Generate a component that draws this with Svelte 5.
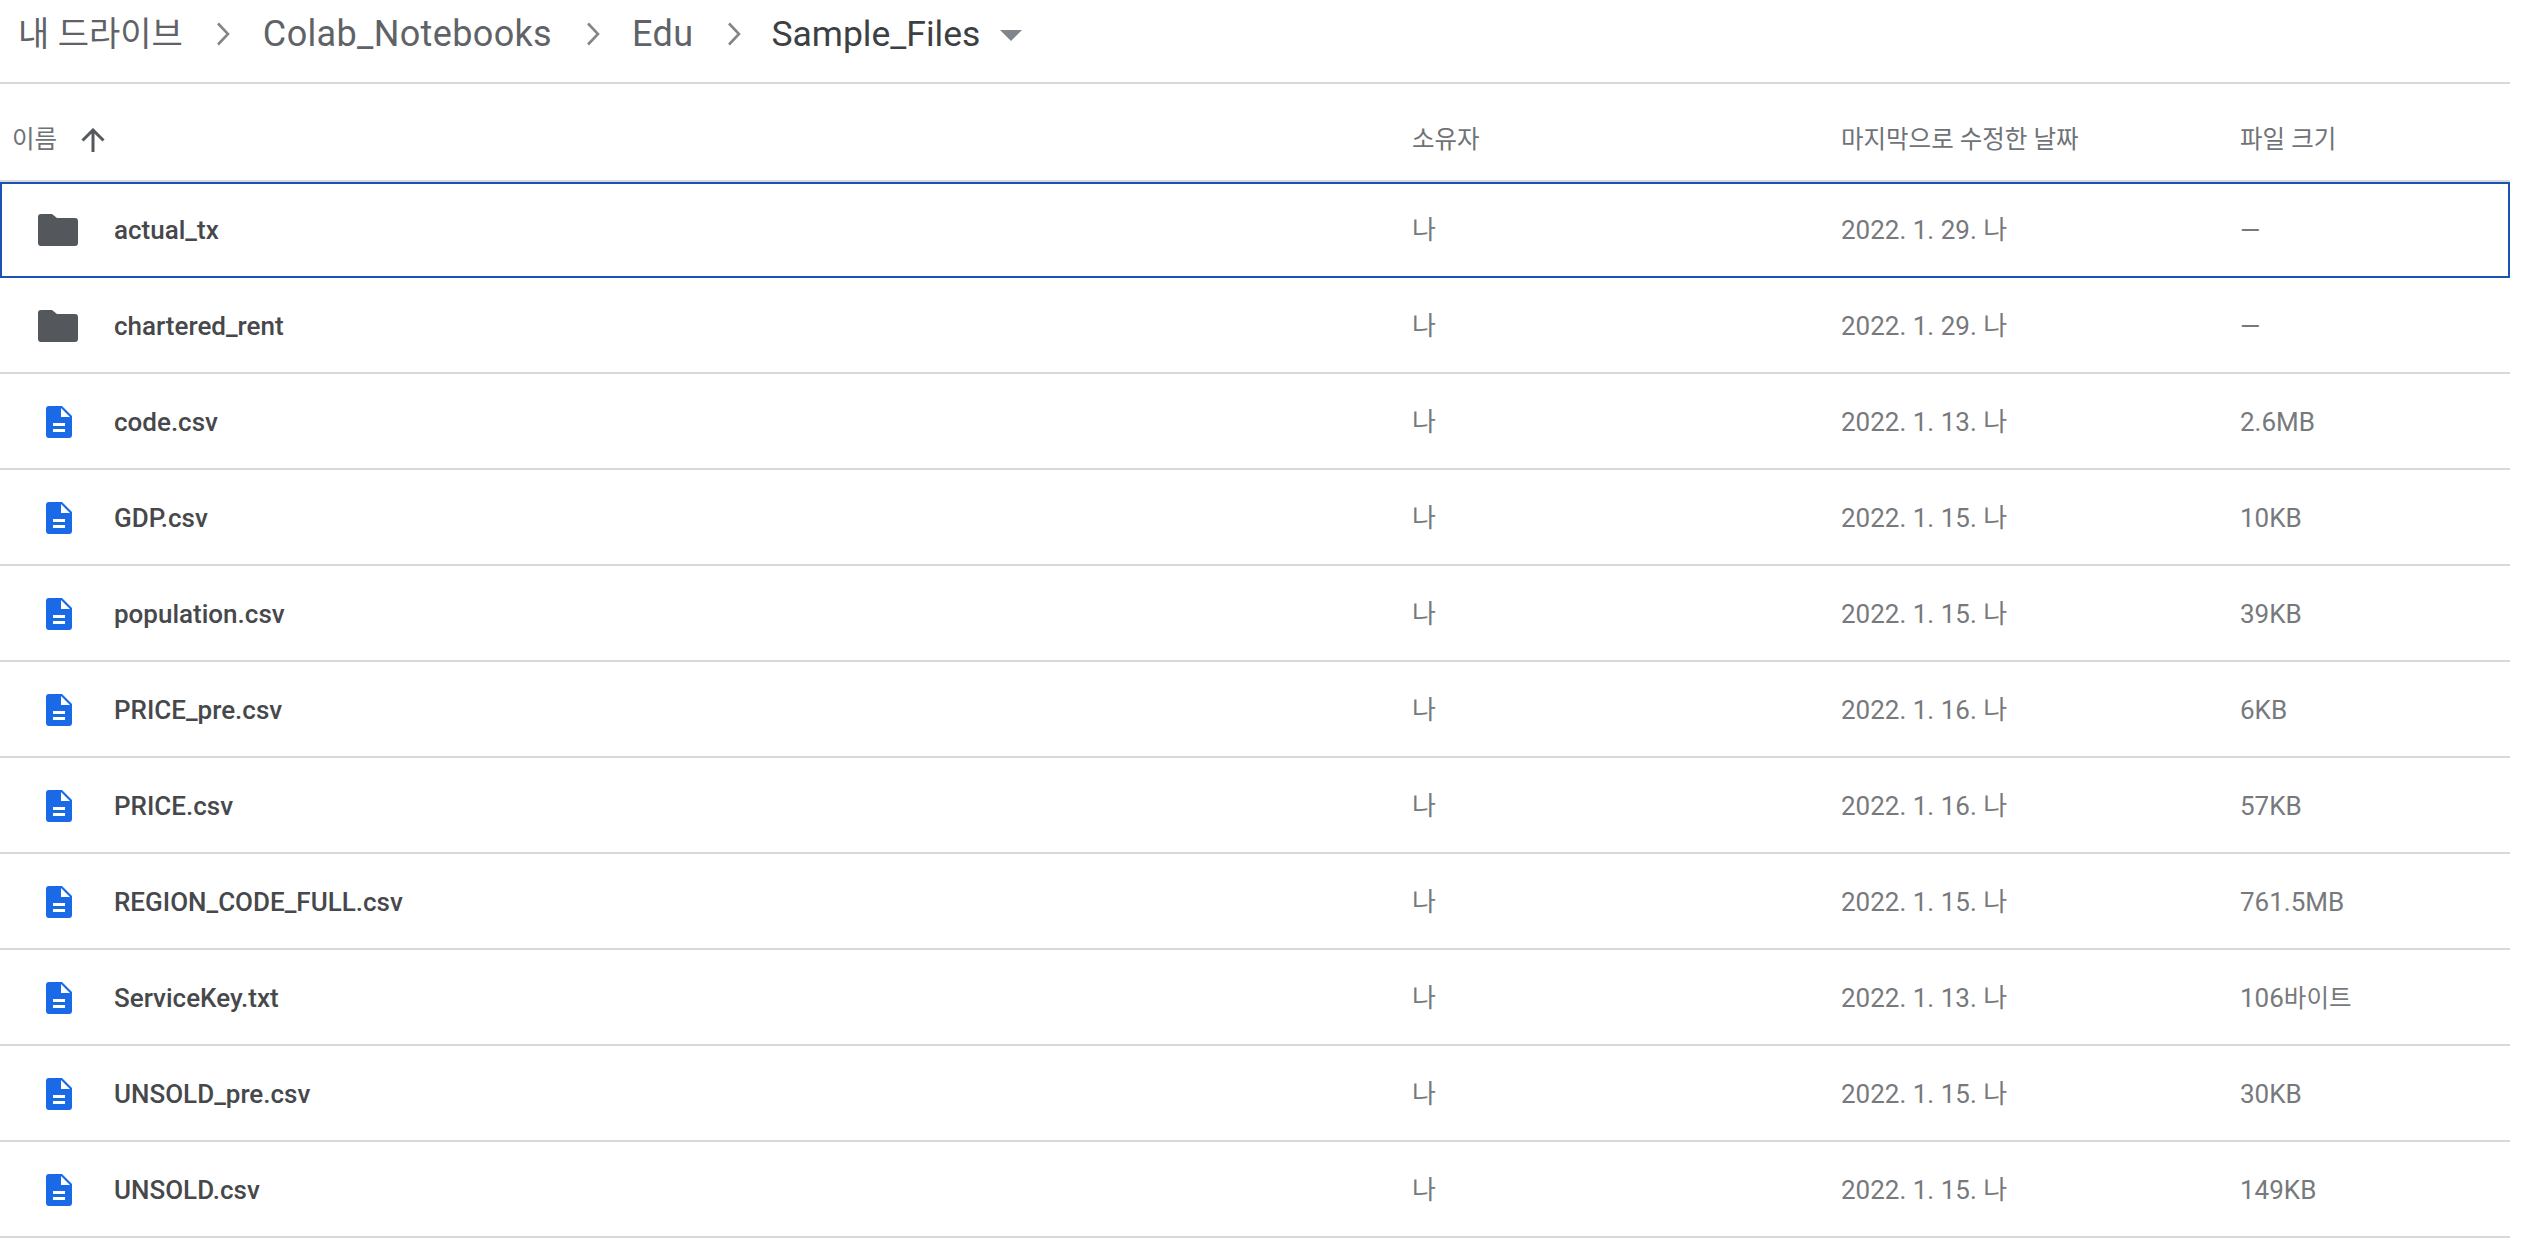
<script>
  const rows = [
    ['folder','actual_tx','2022. 1. 29. 나','—'],
    ['folder','chartered_rent','2022. 1. 29. 나','—'],
    ['file','code.csv','2022. 1. 13. 나','2.6MB'],
    ['file','GDP.csv','2022. 1. 15. 나','10KB'],
    ['file','population.csv','2022. 1. 15. 나','39KB'],
    ['file','PRICE_pre.csv','2022. 1. 16. 나','6KB'],
    ['file','PRICE.csv','2022. 1. 16. 나','57KB'],
    ['file','REGION_CODE_FULL.csv','2022. 1. 15. 나','761.5MB'],
    ['file','ServiceKey.txt','2022. 1. 13. 나','106바이트'],
    ['file','UNSOLD_pre.csv','2022. 1. 15. 나','30KB'],
    ['file','UNSOLD.csv','2022. 1. 15. 나','149KB'],
  ];
</script>

<div class="page">
  <nav class="crumbs">
    <span class="crumb first">내 드라이브</span>
    <svg class="sep" viewBox="0 0 14 24"><path d="M2 1.5 12 12 2 22.5" /></svg>
    <span class="crumb wide">Colab_Notebooks</span>
    <svg class="sep" viewBox="0 0 14 24"><path d="M2 1.5 12 12 2 22.5" /></svg>
    <span class="crumb wide edu">Edu</span>
    <svg class="sep" viewBox="0 0 14 24"><path d="M2 1.5 12 12 2 22.5" /></svg>
    <span class="crumb current">Sample_Files</span>
    <span class="caret"></span>
  </nav>

  <div class="grid head">
    <div class="hname">이름
      <svg class="arrow" viewBox="0 0 24 24"><path d="M12 24V2M1.5 12.5 12 2l10.5 10.5" /></svg>
    </div>
    <div>소유자</div>
    <div>마지막으로 수정한 날짜</div>
    <div>파일 크기</div>
  </div>

  {#each rows as r, i}
    <div class="grid row" class:focus={i === 0}>
      <div class="name">
        <span class="ico" class:file={r[0] === 'file'}>
          {#if r[0] === 'folder'}
            <svg width="40" height="32" viewBox="0 0 40 32"><path fill="#54575c" d="M3 0h11l5 4h18a3 3 0 0 1 3 3v22a3 3 0 0 1-3 3H3a3 3 0 0 1-3-3V3a3 3 0 0 1 3-3z"/></svg>
          {:else}
            <svg width="26" height="32" viewBox="0 0 26 32"><path fill="#1a6ae8" d="M3 0h13l10 10v19a3 3 0 0 1-3 3H3a3 3 0 0 1-3-3V3a3 3 0 0 1 3-3z"/><path fill="#fff" d="M15 2v9h9zM7 17h12v3H7zM7 23h12v3H7z"/></svg>
          {/if}
        </span>
        <span>{r[1]}</span>
      </div>
      <div class="sub">나</div>
      <div class="sub">{r[2]}</div>
      <div class="sub">
        {#if r[3].endsWith('바이트')}{r[3].slice(0, -3)}<span class="ko">바이트</span>{:else}{r[3]}{/if}
      </div>
    </div>
  {/each}
</div>

<style>
  :global(body) { margin: 0; background: #fff; }
  .page {
    width: 2510px;
    height: 1256px;
    overflow: hidden;
    font-family: Roboto, "Noto Sans CJK KR", sans-serif;
  }
  .crumbs {
    height: 84px;
    display: flex;
    align-items: center;
    padding: 0 0 14px 18px;
    box-sizing: border-box;
    border-bottom: 2px solid #d8d9dd;
    font-size: 36px;
    line-height: 44px;
    color: #5f6368;
  }
  .crumb.first { font-size: 34px; margin-right: -1px; }
  .crumb.wide { letter-spacing: 0.35px; }
  .crumb.edu { margin-left: -1px; }
  .crumb.current { color: #3c4043; font-size: 35.5px; margin-left: -3px; }
  .sep { width: 14px; height: 24px; margin: 0 33px 0 34px; flex: none; fill: none; stroke: #80868b; stroke-width: 2.6; }
  .caret {
    width: 0; height: 0;
    margin-left: 20px; margin-top: 2px;
    border: 11px solid transparent;
    border-top: 11px solid #80868b;
    border-bottom: 0;
  }
  .grid {
    display: grid;
    grid-template-columns: 1412px 429px 399px 1fr;
    align-items: center;
    box-sizing: border-box;
  }
  .head {
    height: 98px;
    padding-top: 15px;
    border-bottom: 2px solid #d8d9dd;
    font-size: 24.5px;
    line-height: 32px;
    color: #6f7276;
  }
  .hname { display: flex; align-items: center; padding-left: 12px; gap: 24px; }
  .arrow { width: 24px; height: 24px; fill: none; stroke: #55585d; stroke-width: 3; }
  .row {
    height: 96px;
    padding-top: 2px;
    border-bottom: 2px solid #d8d9dd;
    font-size: 26px;
    line-height: 36px;
    color: #46484b;
  }
  .row.focus {
    outline: 2px solid #1a53b5;
    outline-offset: -2px;
  }
  .name { display: flex; align-items: center; font-weight: 500; }
  .ico { width: 114px; padding-left: 38px; box-sizing: border-box; display: flex; flex: none; }
  .ico.file { padding-left: 46px; }
  .sub { color: #77797d; }
  .ko { font-size: 24.5px; }
</style>
